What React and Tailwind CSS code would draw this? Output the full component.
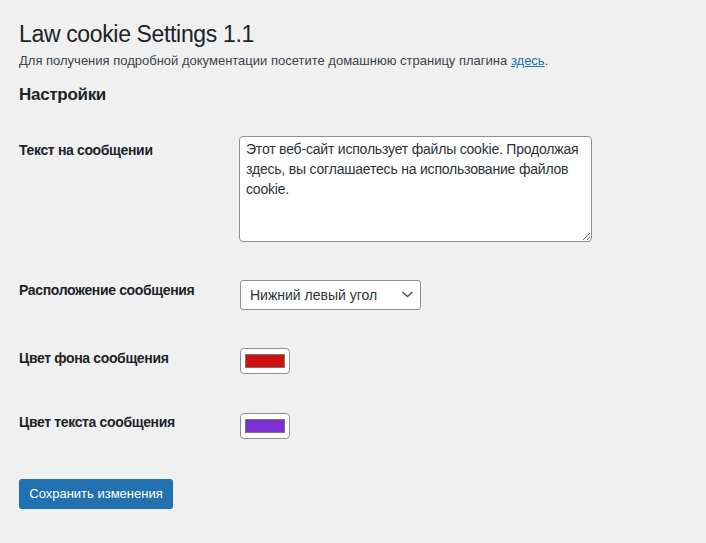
const FONT = { fontFamily: '"Liberation Sans", Arial, sans-serif' }

function Label({ children, className = '' }) {
  return (
    <div className={`w-[221px] shrink-0 text-[14px] font-semibold leading-[18px] tracking-[-0.35px] text-[#1d2327] ${className}`}>
      {children}
    </div>
  )
}

function ColorBox({ color }) {
  return (
    <div className="flex h-[26px] w-[50px] items-center justify-center rounded-[4px] border border-[#8c8f94] bg-white">
      <div className={`h-[14px] w-[40px] border border-[#777777] ${color}`} />
    </div>
  )
}

export default function App() {
  return (
    <div className="min-h-screen bg-[#f0f0f1] pl-[19px] pt-[19px] text-[#3c434a]" style={FONT}>
      <h1 className="text-[23px] font-normal leading-[30px] tracking-[-0.35px] text-[#1d2327]">Law cookie Settings 1.1</h1>
      <p className="mt-[2px] text-[13px] leading-[19px]">
        Для получения подробной документации посетите домашнюю страницу плагина{' '}
        <a href="#" className="text-[#2271b1] underline">здесь</a>.
      </p>
      <h2 className="mt-[14px] text-[17px] font-semibold leading-[22px] tracking-[-0.3px] text-[#1d2327]">Настройки</h2>

      <div className="mt-[30px] flex items-start">
        <Label className="pt-[5px]">Текст на сообщении</Label>
        <textarea
          className="-ml-px h-[106px] w-[353px] rounded-[4px] border border-[#8c8f94] bg-white px-[6px] py-[2px] text-[14px] leading-[20px] tracking-[-0.2px] text-[#2c3338] outline-none"
          style={FONT}
          defaultValue="Этот веб-сайт использует файлы cookie. Продолжая здесь, вы соглашаетесь на использование файлов cookie."
        />
      </div>

      <div className="mt-[38px] flex items-start">
        <Label className="pt-[1px]">Расположение сообщения</Label>
        <div className="relative">
          <select
            className="h-[30px] w-[181px] appearance-none rounded-[3px] border border-[#8c8f94] bg-white pl-[9px] pr-[24px] text-[14px] text-[#2c3338] outline-none"
            style={FONT}
            defaultValue="bl"
          >
            <option value="bl">Нижний левый угол</option>
            <option value="br">Нижний правый угол</option>
          </select>
          <svg className="pointer-events-none absolute right-[7px] top-[9px]" width="13" height="10" viewBox="0 0 13 10" fill="none">
            <path d="M1.5 3l5 4.5 5-4.5" stroke="#50575e" strokeWidth="1.6" />
          </svg>
        </div>
      </div>

      <div className="mt-[38px] flex items-start">
        <Label className="pt-[1px]">Цвет фона сообщения</Label>
        <ColorBox color="bg-[#cf1010]" />
      </div>

      <div className="mt-[39px] flex items-start">
        <Label>Цвет текста сообщения</Label>
        <ColorBox color="bg-[#7c30d0]" />
      </div>

      <button className="mt-[40px] h-[30px] w-[154px] rounded-[3px] bg-[#2271b1] text-[13px] text-white">
        Сохранить изменения
      </button>
    </div>
  )
}
